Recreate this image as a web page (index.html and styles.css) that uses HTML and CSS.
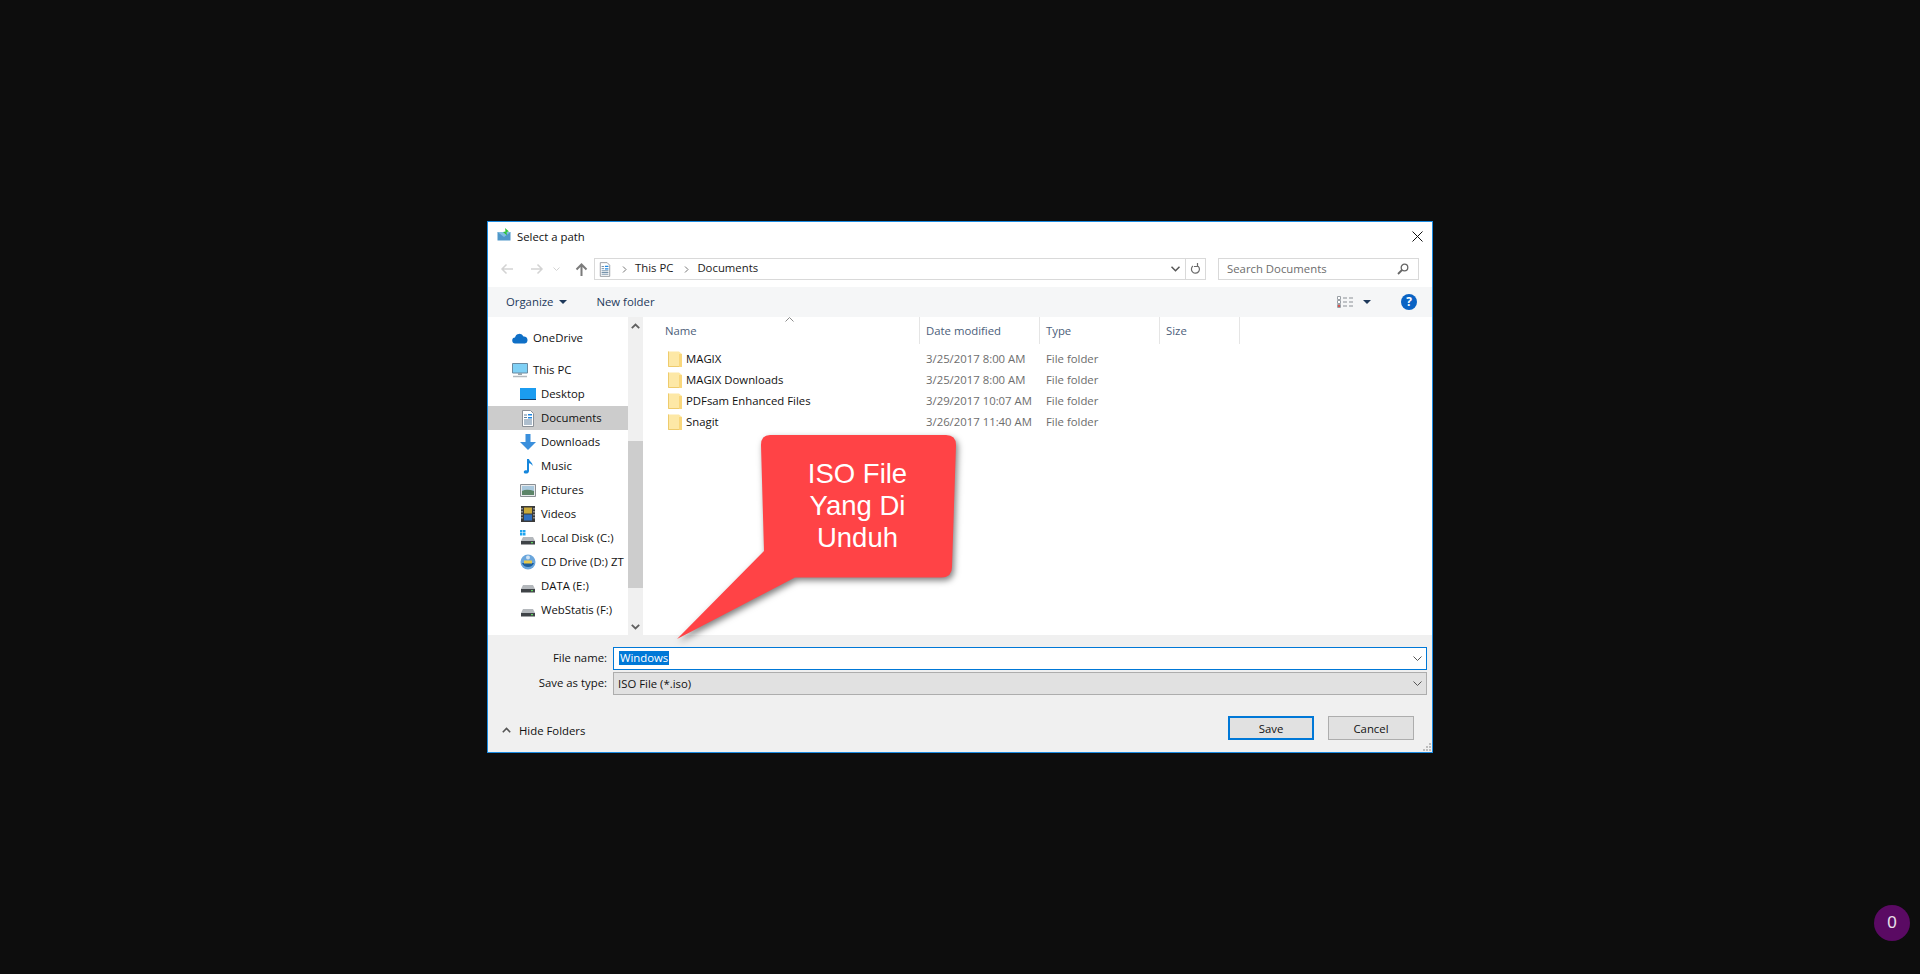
FILE: index.html
```html
<!DOCTYPE html>
<html>
    <head>
        <meta charset="utf-8">
        <title>Select a path</title>
        <link rel="stylesheet" href="styles.css">
    </head>
    <body>
        <svg class="defs" width="0" height="0">
            <symbol id="folder" viewBox="0 0 14 16">
                <path d="M0 0.500h11l3 2.500v13H0z" fill="#fde8a6"/>
                <path d="M0.500 0.500v15h13" stroke="#eecb6c" fill="none"/>
                <path d="M11 3h3v13h-3z" fill="#f9d77c"/>
            </symbol>
            <symbol id="drive" viewBox="0 0 16 16">
                <path d="M3 7h10l2 4H1z" fill="#b4b8bc"/>
                <path d="M1 11h14v3.500H1z" fill="#3f4347"/>
                <path d="M11 12h2v1.200h-2z" fill="#5fd35f"/>
            </symbol>
            <symbol id="doc" viewBox="0 0 14 17">
                <path d="M1.500 0.500h8l3 3v13h-11z" fill="#fff" stroke="#8b9097"/>
                <path d="M3 5h3M3 7.500h3M3 10h8M3 12h8M3 14h8" stroke="#5f7f9c"/>
                <path d="M7 4h4v1.500H7zM7 7h4v1.500H7z" fill="#1f86e0"/>
            </symbol>
        </svg>

        <div class="dialog">
            <div class="titlebar">
                <svg class="app-icon" width="14" height="14" viewBox="0 0 14 14">
                    <path d="M0.500 4h13v8.500h-13z" fill="#4f97c9"/>
                    <path d="M0.500 4l6.500 5 6.500-5" fill="#7fbde0"/>
                    <path d="M8 0l4 3.500-2.500 0.500 0.500 3.500-4-3.500 2.500-0.500z" fill="#2fc23a"/>
                </svg>
                <span class="title-text">Select a path</span>
                <svg class="close-icon" width="11" height="11" viewBox="0 0 11 11">
                    <path d="M0.500 0.500l10 10M10.500 0.500l-10 10" stroke="#111" fill="none"/>
                </svg>
            </div>

            <div class="addressrow">
                <div class="nav-arrows">
                    <svg width="14" height="12" viewBox="0 0 14 12"><path d="M13 6H2M6.500 1.500L2 6l4.500 4.500" stroke="#d3d3d3" stroke-width="1.500" fill="none"/></svg>
                    <svg class="arrow-fwd" width="14" height="12" viewBox="0 0 14 12"><path d="M1 6h11M7.500 1.500L12 6l-4.500 4.500" stroke="#d3d3d3" stroke-width="1.500" fill="none"/></svg>
                    <svg class="arrow-drop" width="7" height="5" viewBox="0 0 7 5"><path d="M0.500 0.500L3.500 3.500l3-3" stroke="#d3d3d3" fill="none"/></svg>
                    <svg class="arrow-up" width="13" height="13" viewBox="0 0 13 13"><path d="M6.500 13V2M1.500 6.500l5-5 5 5" stroke="#7b7b7b" stroke-width="2" fill="none"/></svg>
                </div>
                <div class="breadcrumb">
                    <svg class="crumb-icon" width="12" height="15"><use href="#doc"/></svg>
                    <svg class="crumb-chev" width="5" height="7" viewBox="0 0 5 7"><path d="M1 0.500l3 3-3 3" stroke="#777" fill="none"/></svg>
                    <span class="crumb">This PC</span>
                    <svg class="crumb-chev" width="5" height="7" viewBox="0 0 5 7"><path d="M1 0.500l3 3-3 3" stroke="#777" fill="none"/></svg>
                    <span class="crumb">Documents</span>
                    <svg class="crumb-drop" width="9" height="6" viewBox="0 0 9 6"><path d="M0.500 0.800l4 4 4-4" stroke="#555" stroke-width="1.500" fill="none"/></svg>
                    <div class="crumb-refresh">
                        <svg width="11" height="12" viewBox="0 0 11 12"><path d="M7 2.500a4 4 0 1 1-4 0.500M7.500 0v3.500H4" stroke="#6b6b6b" stroke-width="1.200" fill="none"/></svg>
                    </div>
                </div>
                <div class="searchbox">
                    <span>Search Documents</span>
                    <svg width="12" height="12" viewBox="0 0 12 12"><circle cx="7.500" cy="4.500" r="3.300" stroke="#666" stroke-width="1.300" fill="none"/><path d="M5 7l-4 4" stroke="#666" stroke-width="1.800"/></svg>
                </div>
            </div>

            <div class="toolbar">
                <span class="tool-btn">Organize</span>
                <span class="caret"></span>
                <span class="tool-btn new-folder">New folder</span>
                <svg class="view-icon" width="17" height="13" viewBox="0 0 17 13">
                    <path d="M0.500 0.500h3v3h-3zM0.500 4.500h3v3h-3zM0.500 8.500h3v3h-3z" fill="#fff" stroke="#9aa0a6"/>
                    <path d="M1 9h2v2H1z" fill="#d9534f"/>
                    <path d="M6 2h4M12 2h4M6 6h4M12 6h4M6 10h4M12 10h4" stroke="#8a8f95"/>
                </svg>
                <span class="caret view-caret"></span>
                <span class="help-icon">?</span>
            </div>

            <div class="main">
                <div class="navpane">
                    <div class="navlist">
                        <div class="navrow top first">
                            <svg width="16" height="11" viewBox="0 0 16 11"><path d="M3.500 10.500a3 3 0 0 1-0.500-6 4.500 4.500 0 0 1 8.500-1 3.600 3.600 0 0 1 1.500 7z" fill="#0f6fc6"/></svg>
                            <span>OneDrive</span>
                        </div>
                        <div class="navrow top second">
                            <svg width="16" height="15" viewBox="0 0 16 15"><path d="M0.500 0.500h15v9.500h-15z" fill="#7fd0f5" stroke="#6a8aa0"/><path d="M6 10h4v2H6z" fill="#9aa6ae"/><path d="M1 13.500h14" stroke="#b3b9be" stroke-width="1.500"/></svg>
                            <span>This PC</span>
                        </div>
                        <div class="navrow">
                            <svg width="16" height="12" viewBox="0 0 16 12"><path d="M0 0h16v12H0z" fill="#1b9cf0"/><path d="M0 11h16v1H0z" fill="#123a66"/></svg>
                            <span>Desktop</span>
                        </div>
                        <div class="navrow selected">
                            <svg width="14" height="17"><use href="#doc"/></svg>
                            <span>Documents</span>
                        </div>
                        <div class="navrow">
                            <svg width="16" height="16" viewBox="0 0 16 16"><path d="M5.500 0h5v8H16l-8 8-8-8h5.500z" fill="#3a8fdc"/></svg>
                            <span>Downloads</span>
                        </div>
                        <div class="navrow">
                            <svg width="16" height="16" viewBox="0 0 16 16"><path d="M7 1h2c0.500 3 4 3.500 3.500 7-1-2-2-2.500-3.500-2.800V13c0 1.800-2 3-4 2.500-1.800-0.500-1.500-3 0.500-3.300 0.600-0.100 1.100 0 1.500 0.200z" fill="#1686dc"/></svg>
                            <span>Music</span>
                        </div>
                        <div class="navrow">
                            <svg width="16" height="13" viewBox="0 0 16 13"><path d="M0.500 0.500h15v12h-15z" fill="#e8eaec" stroke="#8a8f94"/><path d="M2 2h12v5H2z" fill="#a9c8dd"/><path d="M2 7c4-2 8-1 12 0v4H2z" fill="#5c8468"/></svg>
                            <span>Pictures</span>
                        </div>
                        <div class="navrow narrow">
                            <svg width="14" height="16" viewBox="0 0 14 16"><path d="M0 0h14v16H0z" fill="#3a3a3a"/><path d="M3 1.500h8v6H3z" fill="#c9a93a"/><path d="M3 8.500h8v6H3z" fill="#2f6fc0"/><path d="M1 2v12M13 2v12" stroke="#ddd" stroke-dasharray="1.500 1.500"/></svg>
                            <span>Videos</span>
                        </div>
                        <div class="navrow">
                            <svg width="16" height="16" viewBox="0 0 16 16"><use href="#drive"/><path d="M0 0h2.500v2.500H0zM3 0h2.500v2.500H3zM0 3h2.500v2.500H0zM3 3h2.500v2.500H3z" fill="#1ea5f0"/></svg>
                            <span>Local Disk (C:)</span>
                        </div>
                        <div class="navrow">
                            <svg width="16" height="16" viewBox="0 0 16 16"><circle cx="8" cy="8" r="7.500" fill="#6aa6dc"/><path d="M2 9a6.500 6.500 0 0 0 12 0z" fill="#1d5e9c"/><path d="M4 6.500h8v3H4z" fill="#e8c84a"/><circle cx="8" cy="3.500" r="2" fill="#cfe2f2"/></svg>
                            <span>CD Drive (D:) ZT</span>
                        </div>
                        <div class="navrow">
                            <svg width="16" height="16"><use href="#drive"/></svg>
                            <span>DATA (E:)</span>
                        </div>
                        <div class="navrow">
                            <svg width="16" height="16"><use href="#drive"/></svg>
                            <span>WebStatis (F:)</span>
                        </div>
                    </div>
                    <div class="scrollbar">
                        <div class="scroll-btn">
                            <svg width="9" height="6" viewBox="0 0 9 6"><path d="M0.800 5.200L4.500 1.500l3.700 3.700" stroke="#606060" stroke-width="1.800" fill="none"/></svg>
                        </div>
                        <div class="scroll-track"><div class="scroll-thumb"></div></div>
                        <div class="scroll-btn">
                            <svg width="9" height="6" viewBox="0 0 9 6"><path d="M0.800 0.800L4.500 4.500l3.700-3.700" stroke="#606060" stroke-width="1.800" fill="none"/></svg>
                        </div>
                    </div>
                </div>

                <div class="files">
                    <div class="file-head">
                        <div class="head-cell name-cell">Name
                            <svg class="sort-mark" width="9" height="5" viewBox="0 0 9 5"><path d="M0.500 4.500l4-4 4 4" stroke="#8a8a8a" fill="none"/></svg>
                        </div>
                        <div class="head-cell">Date modified</div>
                        <div class="head-cell">Type</div>
                        <div class="head-cell">Size</div>
                    </div>
                    <div class="file-list">
                        <div class="file-row">
                            <div class="file-name"><svg width="14" height="16"><use href="#folder"/></svg>MAGIX</div>
                            <div class="file-meta">3/25/2017 8:00 AM</div>
                            <div class="file-meta">File folder</div>
                        </div>
                        <div class="file-row">
                            <div class="file-name"><svg width="14" height="16"><use href="#folder"/></svg>MAGIX Downloads</div>
                            <div class="file-meta">3/25/2017 8:00 AM</div>
                            <div class="file-meta">File folder</div>
                        </div>
                        <div class="file-row">
                            <div class="file-name"><svg width="14" height="16"><use href="#folder"/></svg>PDFsam Enhanced Files</div>
                            <div class="file-meta">3/29/2017 10:07 AM</div>
                            <div class="file-meta">File folder</div>
                        </div>
                        <div class="file-row">
                            <div class="file-name"><svg width="14" height="16"><use href="#folder"/></svg>Snagit</div>
                            <div class="file-meta">3/26/2017 11:40 AM</div>
                            <div class="file-meta">File folder</div>
                        </div>
                    </div>
                </div>
            </div>

            <div class="bottom">
                <div class="form-row">
                    <label class="form-label">File name:</label>
                    <div class="field field-name">
                        <span class="selected-text">Windows</span>
                        <svg width="9" height="5" viewBox="0 0 9 5"><path d="M0.500 0.500l4 4 4-4" stroke="#555" fill="none"/></svg>
                    </div>
                </div>
                <div class="form-row">
                    <label class="form-label">Save as type:</label>
                    <div class="field field-type">
                        <span>ISO File (*.iso)</span>
                        <svg width="9" height="5" viewBox="0 0 9 5"><path d="M0.500 0.500l4 4 4-4" stroke="#555" fill="none"/></svg>
                    </div>
                </div>
                <div class="actions">
                    <div class="hide-folders">
                        <svg width="9" height="6" viewBox="0 0 9 6"><path d="M0.800 5.200L4.500 1.500l3.700 3.700" stroke="#555" stroke-width="1.600" fill="none"/></svg>
                        <span>Hide Folders</span>
                    </div>
                    <button class="btn btn-save">Save</button>
                    <button class="btn">Cancel</button>
                </div>
                <svg class="grip" width="8" height="8" viewBox="0 0 8 8">
                    <path d="M6 0h2v2H6zM3 3h2v2H3zM6 3h2v2H6zM0 6h2v2H0zM3 6h2v2H3zM6 6h2v2H6z" fill="#bdbdbd"/>
                </svg>
            </div>

            <div class="callout">
                <svg class="callout-shape" width="280" height="205" viewBox="0 0 280 205">
                    <path d="M93 0h176q10 0 10 10l-4 122q0 10-10 10.500H118L0 204 87 116 84 10q0-10 9-10z" fill="#ff4346"/>
                </svg>
                <div class="callout-text">ISO File<br>Yang Di<br>Unduh</div>
            </div>
        </div>

        <div class="badge">0</div>
    </body>
</html>
```

FILE: styles.css
```css
* {
    box-sizing: border-box;
}
html, body {
    margin: 0;
    height: 100%;
}
body {
    background-color: #0d0d0d;
    display: flex;
    align-items: center;
    justify-content: center;
    font-family: "Open Sans", "Noto Sans", sans-serif;
    font-size: 11.350px;
    color: #111;
}
svg {
    display: block;
    flex: none;
}
.defs {
    position: absolute;
}

.dialog {
    position: relative;
    width: 946px;
    height: 532px;
    border: 1px solid #1a8ae0;
    background-color: #fff;
    display: flex;
    flex-direction: column;
}

.titlebar {
    height: 30px;
    display: flex;
    align-items: center;
    padding: 0 9px 0 9px;
}
.app-icon {
    margin-bottom: 4px;
}
.title-text {
    margin-left: 6px;
    margin-bottom: 2px;
    flex: 1;
}
.close-icon {
    margin-bottom: 2px;
}

.addressrow {
    height: 35px;
    display: flex;
    padding-top: 6px;
    align-items: flex-start;
}
.nav-arrows {
    width: 106px;
    height: 22px;
    display: flex;
    align-items: center;
    padding-left: 12px;
}
.arrow-fwd {
    margin-left: 16px;
}
.arrow-drop {
    margin-left: 9px;
}
.arrow-up {
    margin-left: 15px;
}
.breadcrumb {
    width: 612px;
    height: 22px;
    border: 1px solid #d9d9d9;
    display: flex;
    align-items: center;
    padding-left: 4px;
}
.crumb-chev {
    margin-left: 11px;
}
.crumb {
    margin-left: 8px;
    margin-bottom: 3px;
    color: #1a1a1a;
}
.crumb-drop {
    margin-left: auto;
    margin-right: 5px;
}
.crumb-refresh {
    width: 20px;
    height: 20px;
    border-left: 1px solid #d9d9d9;
    display: flex;
    align-items: center;
    justify-content: center;
}
.searchbox {
    width: 201px;
    height: 22px;
    margin-left: 12px;
    border: 1px solid #d9d9d9;
    display: flex;
    align-items: center;
    justify-content: space-between;
    padding: 0 9px 0 8px;
    color: #6d6d6d;
}
.searchbox span {
    margin-bottom: 2px;
}

.toolbar {
    height: 30px;
    background-color: #f5f6f7;
    display: flex;
    align-items: center;
    padding: 0 15px 0 18px;
    color: #1e395b;
}
.tool-btn {
    margin-bottom: 2px;
}
.caret {
    width: 0;
    height: 0;
    border-left: 4px solid transparent;
    border-right: 4px solid transparent;
    border-top: 4px solid #1e395b;
    margin-left: 6px;
}
.new-folder {
    margin-left: 29px;
}
.view-icon {
    margin-left: auto;
}
.view-caret {
    margin-left: 9px;
}
.help-icon {
    width: 16px;
    height: 16px;
    margin-left: 30px;
    border-radius: 50%;
    background-color: #0a63c4;
    color: #fff;
    font-weight: 700;
    font-size: 12px;
    line-height: 16px;
    text-align: center;
}

.main {
    height: 318px;
    display: flex;
}
.navpane {
    width: 155px;
    display: flex;
}
.navlist {
    width: 140px;
    padding-top: 9px;
}
.navrow {
    height: 24px;
    display: flex;
    align-items: center;
    padding-left: 32px;
    white-space: nowrap;
}
.navrow span {
    margin-bottom: 2px;
}
.navrow > svg {
    margin-right: 5px;
}
.navrow.top {
    padding-left: 24px;
}
.navrow.second {
    margin-top: 8px;
}
.navrow.selected {
    background-color: #cccccc;
}
.navrow.selected > svg,
.navrow.narrow > svg {
    margin-left: 1px;
    margin-right: 6px;
}
.scrollbar {
    width: 15px;
    display: flex;
    flex-direction: column;
    background-color: #f0f0f0;
}
.scroll-btn {
    height: 17px;
    display: flex;
    align-items: center;
    justify-content: center;
}
.scroll-track {
    flex: 1;
    padding-top: 107px;
}
.scroll-thumb {
    height: 147px;
    background-color: #cdcdcd;
}

.files {
    flex: 1;
    padding-left: 4px;
}
.file-head,
.file-row {
    display: grid;
    grid-template-columns: 273px 120px 120px 80px;
}
.file-head {
    height: 27px;
}
.head-cell {
    position: relative;
    border-right: 1px solid #e5e5e5;
    padding-left: 6px;
    line-height: 27px;
    color: #4c607a;
}
.head-cell.name-cell {
    padding-left: 18px;
}
.sort-mark {
    position: absolute;
    left: 138px;
    top: 0;
}
.file-list {
    padding-top: 5px;
}
.file-row {
    height: 21px;
    padding-bottom: 2px;
    align-items: center;
}
.file-name {
    display: flex;
    align-items: center;
    gap: 4px;
    padding-left: 21px;
}
.file-meta {
    padding-left: 6px;
    color: #6d6d6d;
}

.bottom {
    position: relative;
    flex: 1;
    background-color: #f0f0f0;
    padding: 12px 4px 0 0;
}
.form-row {
    height: 25px;
    display: flex;
}
.form-label {
    width: 119px;
    height: 22px;
    line-height: 22px;
    text-align: right;
}
.field {
    width: 814px;
    height: 23px;
    margin-left: 6px;
    display: flex;
    align-items: center;
    justify-content: space-between;
    padding: 0 4px 1px 4px;
}
.field-name {
    background-color: #fff;
    border: 1px solid #0078d7;
    padding-left: 5px;
}
.field-type {
    background-color: #e1e1e1;
    border: 1px solid #adadad;
}
.selected-text {
    background-color: #0078d7;
    color: #fff;
    line-height: 14px;
    padding: 0 1px;
}
.actions {
    height: 24px;
    margin-top: 19px;
    display: flex;
    align-items: center;
    padding: 0 14px 0 14px;
}
.hide-folders {
    display: flex;
    align-items: center;
    gap: 8px;
    margin-top: 4px;
    margin-right: auto;
}
.btn {
    width: 86px;
    height: 24px;
    margin-left: 14px;
    border: 1px solid #adadad;
    background-color: #e1e1e1;
    font: inherit;
    color: #111;
    padding: 0;
}
.btn-save {
    border: 2px solid #0078d7;
}
.grip {
    position: absolute;
    right: 1px;
    bottom: 1px;
}

/* red annotation drawn over the dialog */
.callout {
    position: absolute;
    left: 189px;
    top: 213px;
    width: 280px;
    height: 205px;
}
.callout-shape {
    overflow: visible;
    filter: drop-shadow(2px 3px 3px rgba(0, 0, 0, 0.5));
}
.callout-text {
    position: absolute;
    left: 84px;
    top: 23px;
    width: 193px;
    text-align: center;
    color: #fff;
    font-family: "Liberation Sans", Arial, sans-serif;
    font-size: 27.500px;
    line-height: 32px;
}

.badge {
    position: fixed;
    right: 10px;
    bottom: 33px;
    width: 36px;
    height: 36px;
    border-radius: 50%;
    background-color: #5a0a63;
    color: #e8e0ea;
    font-family: "Liberation Sans", sans-serif;
    font-size: 17px;
    line-height: 36px;
    text-align: center;
}
```
